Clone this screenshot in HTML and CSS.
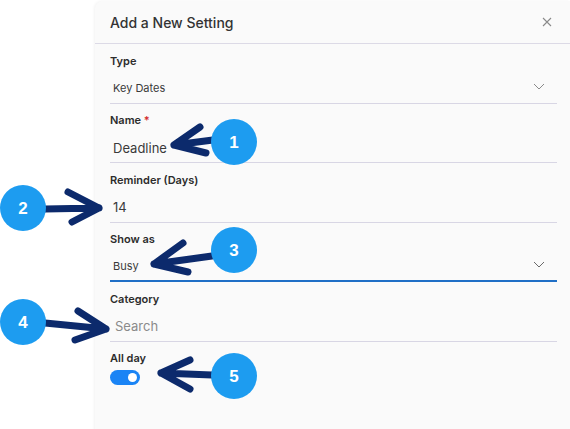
FILE: index.html
```html
<!DOCTYPE html>
<html lang="en">
<head>
    <meta charset="UTF-8">
    <title>Add a New Setting</title>
    <link rel="stylesheet" href="styles.css">
</head>
<body>
    <div class="panel">
        <div class="panel-header">
            <h1>Add a New Setting</h1>
            <svg class="close-icon" width="10" height="10" viewBox="0 0 10 10">
                <path d="M1 1 L9 9 M9 1 L1 9" stroke="#8a8a8a" stroke-width="1.1" fill="none"/>
            </svg>
        </div>
        <form class="setting-form">
            <div class="field">
                <label>Type</label>
                <div class="control select small">
                    <span>Key Dates</span>
                    <svg class="chevron" width="12" height="7" viewBox="0 0 12 7"><path d="M1 1 L6 6 L11 1" stroke="#8a8a8a" stroke-width="1" fill="none"/></svg>
                </div>
            </div>
            <div class="field">
                <label>Name <span class="required">*</span></label>
                <div class="control"><span>Deadline</span></div>
            </div>
            <div class="field">
                <label>Reminder (Days)</label>
                <div class="control"><span>14</span></div>
            </div>
            <div class="field">
                <label>Show as</label>
                <div class="control select small active">
                    <span>Busy</span>
                    <svg class="chevron" width="12" height="7" viewBox="0 0 12 7"><path d="M1 1 L6 6 L11 1" stroke="#6a6a6a" stroke-width="1" fill="none"/></svg>
                </div>
            </div>
            <div class="field">
                <label>Category</label>
                <div class="control"><span class="placeholder">Search</span></div>
            </div>
            <div class="field">
                <label>All day</label>
                <div class="toggle"><span class="knob"></span></div>
            </div>
        </form>
    </div>

    <!-- callouts drawn over the form -->
    <svg class="callouts" width="570" height="429" viewBox="0 0 570 429">
        <g stroke="#0c2a6c" stroke-width="7" stroke-linecap="round" stroke-linejoin="round" fill="none">
            <path d="M213 140 L174 145 M174 145 L200 127 M174 145 L206 153"/>
            <path d="M45 209 L99 208 M99 208 L68 192 M99 208 L72 222"/>
            <path d="M212 256 L154 264 M154 264 L183 243 M154 264 L188 272"/>
            <path d="M45 323 L106 329 M106 329 L78 311 M106 329 L75 340"/>
            <path d="M212 375 L161 373 M161 373 L190 360 M161 373 L190 389"/>
        </g>
        <g fill="#1d9cf0">
            <circle cx="234" cy="142" r="23"/>
            <circle cx="23" cy="208" r="23"/>
            <circle cx="234" cy="250" r="23"/>
            <circle cx="23" cy="322" r="23"/>
            <circle cx="234" cy="376" r="23"/>
        </g>
        <g class="callout-num" fill="#fff" text-anchor="middle">
            <text x="234" y="148">1</text>
            <text x="23" y="214">2</text>
            <text x="234" y="256">3</text>
            <text x="23" y="328">4</text>
            <text x="234" y="382">5</text>
        </g>
    </svg>
</body>
</html>
```

FILE: styles.css
```css
body {
    margin: 0;
    background: #fff;
    font-family: Inter, "Noto Sans", sans-serif;
    color: #333;
    width: 570px;
    height: 429px;
    overflow: hidden;
    position: relative;
}

.panel {
    margin: 1px 0 0 95px;
    height: 440px;
    background: #fafafa;
    border-top-left-radius: 8px;
    box-shadow: -1px 0 3px rgba(0, 0, 0, 0.05);
}

.panel-header {
    height: 42px;
    display: flex;
    align-items: center;
    justify-content: space-between;
    padding: 0 18px 0 15px;
    border-bottom: 1px solid #dcdae6;
}
.panel-header h1 {
    margin: 0;
    font-size: 14px;
    font-weight: 500;
    color: #333;
}

.setting-form {
    padding: 0 13px 0 15px;
}
.field {
    padding-top: 8.5px;
}
.field label {
    display: block;
    height: 16px;
    line-height: 16px;
    font-size: 11px;
    font-weight: 600;
    color: #2c2c2c;
    margin-bottom: 2px;
}
.required {
    color: #d32f2f;
}
.control {
    height: 33px;
    box-sizing: border-box;
    display: flex;
    align-items: center;
    justify-content: space-between;
    padding: 3px 12px 0 3px;
    border-bottom: 1px solid #d8d6e4;
    font-size: 13px;
    color: #3a3a3a;
}
.control.small {
    font-size: 11px;
}
.control.active {
    border-bottom: 2px solid #1f6fc6;
}
.chevron {
    margin-top: -3px;
}
.placeholder {
    color: #8a8a8a;
    margin-left: 2px;
}

.toggle {
    margin-top: 4px;
    width: 30px;
    height: 15px;
    border-radius: 8px;
    background: #1a84f5;
    position: relative;
}
.knob {
    position: absolute;
    right: 3px;
    top: 3px;
    width: 9px;
    height: 9px;
    border-radius: 50%;
    background: #fff;
}

.callouts {
    position: absolute;
    left: 0;
    top: 0;
}
.callout-num {
    font-family: "Liberation Sans", Arial, sans-serif;
    font-weight: bold;
    font-size: 17px;
}
```
